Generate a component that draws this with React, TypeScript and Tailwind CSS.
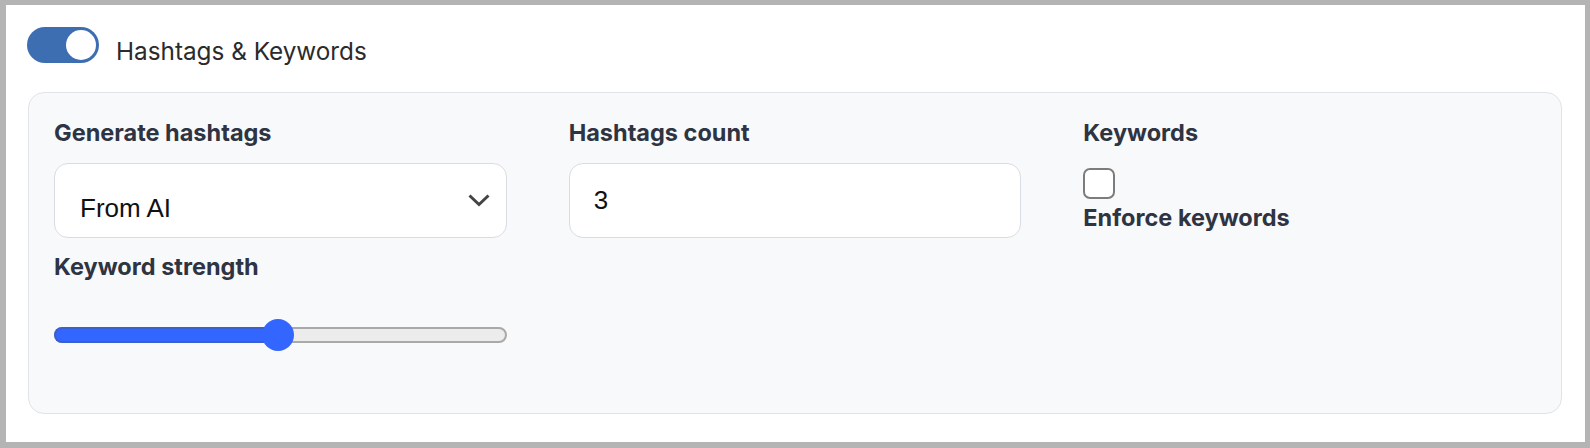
import { useState } from 'react';

const labelCls = "block text-[23.5px] leading-[28px] font-bold text-[#2e3442] font-['Inter',sans-serif]";

export default function App() {
  const [enabled, setEnabled] = useState(true);
  const [enforce, setEnforce] = useState(false);

  return (
    <div className="w-[1590px] h-[448px] bg-white border-t-[5px] border-r-[5px] border-b-[6px] border-l-[6px] border-[#b4b4b4] pt-[22px] pl-[21px] pr-[23px]">
      {/* Header toggle */}
      <div className="flex items-center h-[36px]">
        <button
          type="button"
          onClick={() => setEnabled(!enabled)}
          className="relative w-[72px] h-[36px] rounded-full bg-[#3d6eb1] shrink-0"
        >
          <span className="absolute right-[3px] top-[3px] w-[30px] h-[30px] rounded-full bg-white" />
        </button>
        <span className="ml-[17px] mt-[13px] text-[24.3px] leading-[29px] text-[#2b2b2b] font-['Inter',sans-serif]">
          Hashtags &amp; Keywords
        </span>
      </div>

      {/* Settings panel */}
      <div className="mt-[29px] ml-px h-[322px] rounded-[16px] border border-[#e1e3e8] bg-[#f8f9fb] px-[25px] pt-[26px] pb-[24px]">
        <div className="grid grid-cols-3 gap-x-[62px] gap-y-[15px]">
          {/* Generate hashtags */}
          <div>
            <label className={labelCls}>Generate hashtags</label>
            <div className="mt-4 h-[75px] rounded-[14px] border border-[#d9dce3] bg-white pl-[25px] pr-[16px] flex items-center justify-between">
              <span className="pt-4 text-[26px] text-[#111] font-['Liberation_Sans',sans-serif]">From AI</span>
              <svg width="22" height="13" viewBox="0 0 22 13" fill="none">
                <polyline points="1.5,1.5 11,10.5 20.5,1.5" stroke="#444" strokeWidth="3" strokeLinejoin="miter" />
              </svg>
            </div>
          </div>

          {/* Hashtags count */}
          <div>
            <label className={labelCls}>Hashtags count</label>
            <div className="mt-4 h-[75px] rounded-[14px] border border-[#d9dce3] bg-white pl-[24px] flex items-center">
              <span className="text-[26px] text-[#111] font-['Liberation_Sans',sans-serif]">3</span>
            </div>
          </div>

          {/* Keywords */}
          <div>
            <label className={labelCls}>Keywords</label>
            <button
              type="button"
              onClick={() => setEnforce(!enforce)}
              className="mt-[21px] block w-[32px] h-[31px] rounded-[7px] border-2 border-[#7c7c7c] bg-white"
            />
            <span className={`${labelCls} mt-[5px]`}>Enforce keywords</span>
          </div>

          {/* Keyword strength */}
          <div>
            <label className={labelCls}>Keyword strength</label>
            <div className="h-[108px] flex items-center">
              <div className="relative w-full h-[16px] rounded-full bg-[#ececec] border-2 border-[#a9a9a9]">
                <div className="absolute -left-[2px] -top-[2px] h-[16px] w-[calc(49.5%+2px)] rounded-l-full bg-[#3366ff] border-y-2 border-l-2 border-[#3a5fd0]" />
                <div className="absolute left-[calc(49.5%-16px)] top-[-10px] w-[32px] h-[32px] rounded-full bg-[#3366ff]" />
              </div>
            </div>
          </div>
        </div>
      </div>
    </div>
  );
}
